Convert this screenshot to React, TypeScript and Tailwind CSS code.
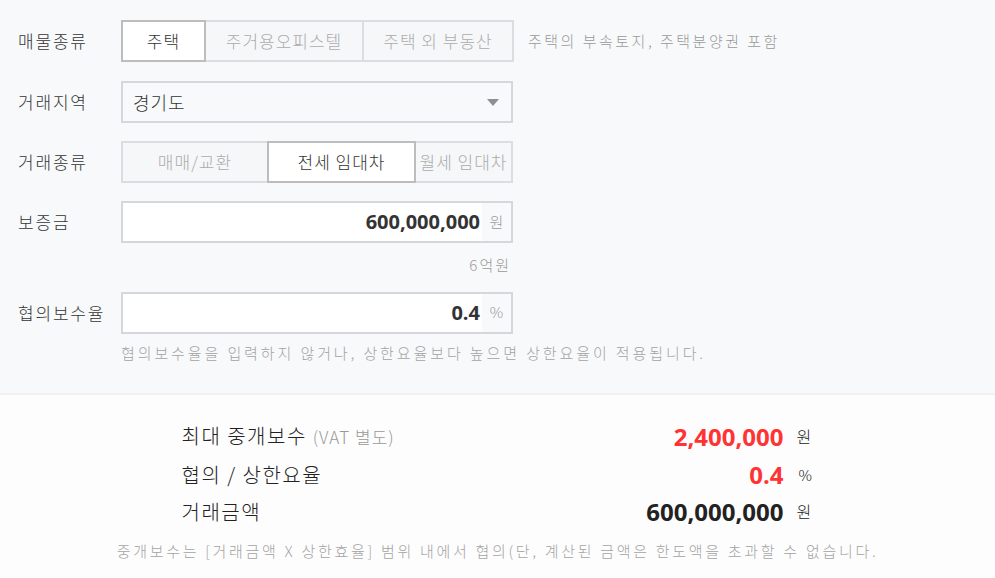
const KR = "font-['Noto_Sans_CJK_KR','Noto_Sans',sans-serif]";
const NUM = "font-['Open_Sans','Noto_Sans_CJK_KR',sans-serif]";

function Segment({
  items,
  widths,
  active,
}: {
  items: string[];
  widths: string[];
  active: number;
}) {
  return (
    <div className="flex h-[42px]">
      {items.map((item, i) => (
        <button
          key={item}
          type="button"
          className={`flex h-full shrink-0 items-center justify-center whitespace-nowrap border-2 text-[17px] tracking-[1px] ${widths[i]} ${
            i > 0 ? "-ml-[2px]" : ""
          } ${
            i === active
              ? "relative z-10 border-[#bdbdbd] bg-white text-[#333]"
              : "border-[#dcdde0] bg-[#f6f7f9] text-[#acacac]"
          }`}
        >
          {item}
        </button>
      ))}
    </div>
  );
}

function Row({ label, children }: { label: string; children: React.ReactNode }) {
  return (
    <div className="flex items-center">
      <div className="w-[103px] shrink-0 text-[17px] tracking-[1.8px] text-[#333]">{label}</div>
      {children}
    </div>
  );
}

function NumberInput({ value, unit }: { value: string; unit: string }) {
  return (
    <div className="flex h-[42px] w-[392px] border-2 border-[#d6d7da] bg-[#f8f9fb]">
      <div className={`flex flex-1 items-center justify-end bg-white pr-[2px] text-[20px] font-bold text-[#333] ${NUM}`}>
        {value}
      </div>
      <div className="flex w-[29px] items-center justify-center text-[15px] text-[#999]">{unit}</div>
    </div>
  );
}

export default function App() {
  return (
    <div className={`min-h-[578px] w-full bg-[#fdfdfd] font-light ${KR}`}>
      <section className="flex h-[395px] flex-col border-b-2 border-[#f0f0f0] bg-[#f8f9fb] pl-[18px] pt-[20px]">
        <Row label="매물종류">
          <Segment
            items={["주택", "주거용오피스텔", "주택 외 부동산"]}
            widths={["w-[85px]", "w-[160px]", "w-[152px]"]}
            active={0}
          />
          <span className="ml-[14px] text-[15px] tracking-[2.5px] text-[#9a9a9a]">주택의 부속토지, 주택분양권 포함</span>
        </Row>

        <div className="mt-[19px]">
          <Row label="거래지역">
            <div className="flex h-[42px] w-[392px] items-center justify-between border-2 border-[#d6d7da] bg-[#f8f9fb] pl-[10px] pr-[12px]">
              <span className="text-[18px] tracking-[1px] text-[#333]">경기도</span>
              <svg width="12" height="7" viewBox="0 0 12 7">
                <path d="M0 0h12L6 7z" fill="#8e8e93" />
              </svg>
            </div>
          </Row>
        </div>

        <div className="mt-[18px]">
          <Row label="거래종류">
            <Segment
              items={["매매/교환", "전세 임대차", "월세 임대차"]}
              widths={["w-[148px]", "w-[149px]", "w-[99px]"]}
              active={1}
            />
          </Row>
        </div>

        <div className="mt-[18px]">
          <Row label="보증금">
            <NumberInput value="600,000,000" unit="원" />
          </Row>
        </div>
        <div className="mt-[11px] w-[495px] pr-[2px] text-right text-[15px] tracking-[2px] text-[#9a9a9a]">6억원</div>

        <div className="mt-[15px]">
          <Row label="협의보수율">
            <NumberInput value="0.4" unit="%" />
          </Row>
        </div>
        <div className="mt-[8px] pl-[103px] text-[15px] tracking-[2.9px] text-[#a3a3a3]">
          협의보수율을 입력하지 않거나, 상한요율보다 높으면 상한요율이 적용됩니다.
        </div>
      </section>

      <section className="flex flex-col items-center pt-[22px]">
        <div className="grid w-[632px] grid-cols-[1fr_auto_30px] items-center text-[20px] leading-[37.5px] tracking-[1.5px] text-[#222]">
          <div>
            최대 중개보수 <span className="text-[17px] tracking-[1px] text-[#999]">(VAT 별도)</span>
          </div>
          <div className={`text-right text-[24px] font-bold tracking-normal text-[#ff3333] ${NUM}`}>2,400,000</div>
          <div className="pl-[13px] text-[16px]">원</div>

          <div>협의 / 상한요율</div>
          <div className={`text-right text-[24px] font-bold tracking-normal text-[#ff3333] ${NUM}`}>0.4</div>
          <div className="pl-[15px] text-[15px]">%</div>

          <div>거래금액</div>
          <div className={`text-right text-[24px] font-bold tracking-normal text-[#222] ${NUM}`}>600,000,000</div>
          <div className="pl-[13px] text-[16px]">원</div>
        </div>
        <p className="mt-[9px] text-[15px] tracking-[2.7px] text-[#a3a3a3]">
          중개보수는 [거래금액 X 상한효율] 범위 내에서 협의(단, 계산된 금액은 한도액을 초과할 수 없습니다.
        </p>
      </section>
    </div>
  );
}
